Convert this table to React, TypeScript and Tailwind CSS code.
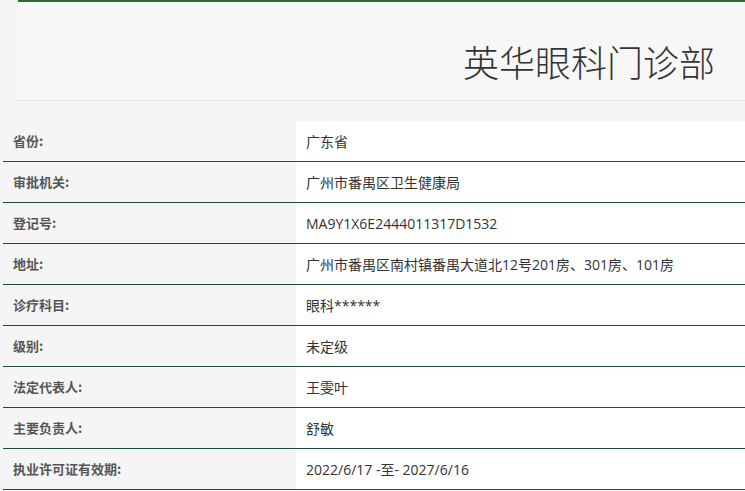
import React from "react";

const rows: [string, string][] = [
  ["省份:", "广东省"],
  ["审批机关:", "广州市番禺区卫生健康局"],
  ["登记号:", "MA9Y1X6E2444011317D1532"],
  ["地址:", "广州市番禺区南村镇番禺大道北12号201房、301房、101房"],
  ["诊疗科目:", "眼科******"],
  ["级别:", "未定级"],
  ["法定代表人:", "王雯叶"],
  ["主要负责人:", "舒敏"],
  ["执业许可证有效期:", "2022/6/17 -至- 2027/6/16"],
];

export default function App() {
  return (
    <div
      className="w-[745px] h-[491px] overflow-hidden bg-[#f5f5f5]"
      style={{ fontFamily: '"Noto Sans CJK SC", "Noto Sans", sans-serif' }}
    >
      <div className="ml-[18px] h-[2px] bg-[#2f6b2f]" />
      <div className="ml-[16px] h-[99px] border-b border-[#e6e6e6] bg-[#f7f7f7] flex items-center justify-end pr-[30px]">
        <h1 className="text-[36px] leading-none text-[#333] pt-[20px]" style={{ fontFamily: '"Noto Sans CJK SC", sans-serif', fontWeight: 300 }}>
          英华眼科门诊部
        </h1>
      </div>
      <div className="mt-[20px] ml-[3px]">
        {rows.map(([k, v]) => (
          <div key={k} className="flex h-[41px] border-b-[1.5px] border-[#1f4d38]">
            <div className="w-[293px] flex items-center pl-[10px] text-[13px] font-bold text-[#555]">{k}</div>
            <div
              className="flex-1 bg-white flex items-center pl-[10px] text-[14px] text-[#333]"
              style={{ fontFamily: '"Open Sans", "Noto Sans CJK SC", sans-serif' }}
            >
              {v}
            </div>
          </div>
        ))}
      </div>
    </div>
  );
}
